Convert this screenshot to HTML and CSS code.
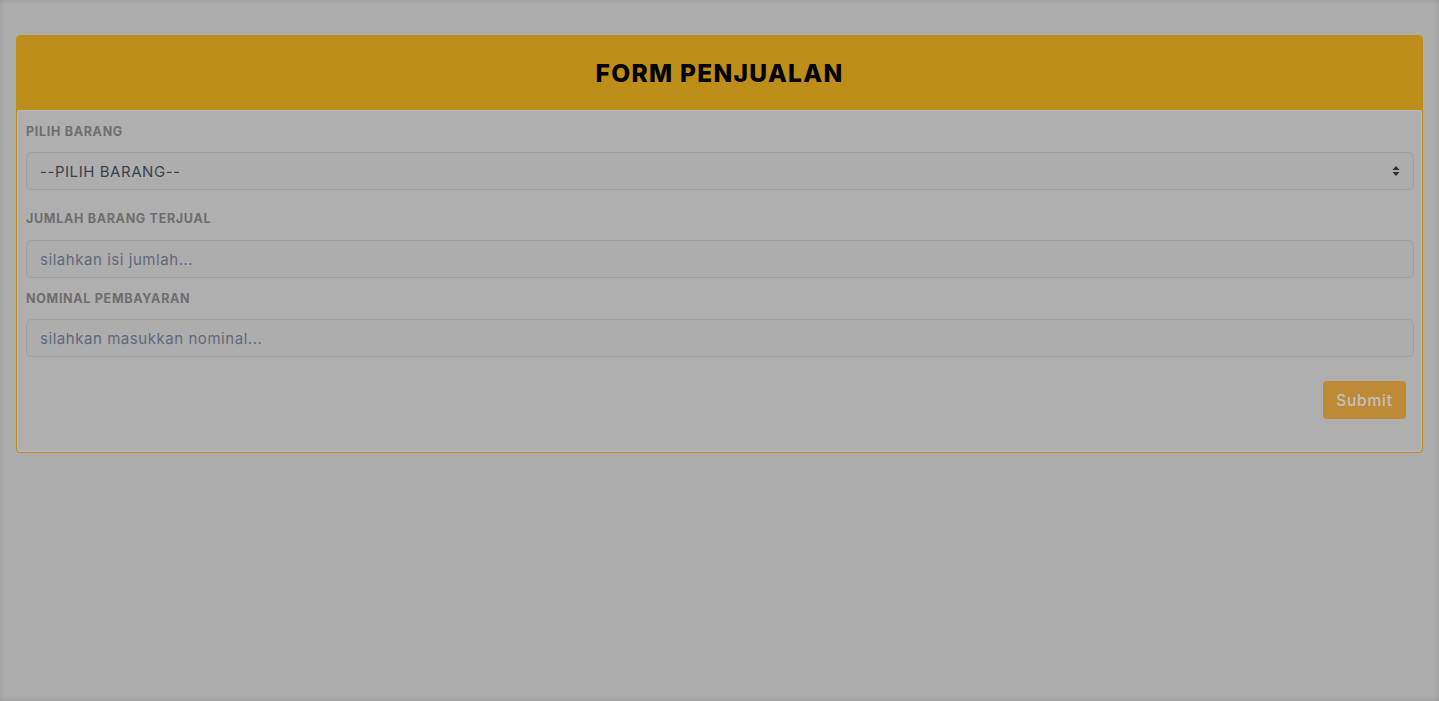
FILE: index.html
```html
<!DOCTYPE html>
<html lang="id">
<head>
    <meta charset="UTF-8">
    <meta name="viewport" content="width=device-width, initial-scale=1.0">
    <title>Form Penjualan</title>
    <link rel="stylesheet" href="styles.css">
</head>
<body>
    <div class="page">
        <div class="card">
            <div class="card-header">
                <h1>FORM PENJUALAN</h1>
            </div>
            <div class="card-body">
                <div class="form-group first">
                    <label for="barang">PILIH BARANG</label>
                    <div class="select-wrap">
                        <select id="barang">
                            <option>--PILIH BARANG--</option>
                        </select>
                        <svg class="caret" width="8" height="12" viewBox="0 0 8 12">
                            <path d="M4 1 L7.5 5 L0.5 5 Z M4 11 L7.5 7 L0.5 7 Z" fill="#2b2f36"/>
                        </svg>
                    </div>
                </div>

                <div class="form-group second">
                    <label for="jumlah">JUMLAH BARANG TERJUAL</label>
                    <input type="text" id="jumlah" placeholder="silahkan isi jumlah...">
                </div>

                <div class="form-group third">
                    <label for="nominal">NOMINAL PEMBAYARAN</label>
                    <input type="text" id="nominal" placeholder="silahkan masukkan nominal...">
                </div>

                <div class="actions">
                    <button type="button">Submit</button>
                </div>
            </div>
        </div>
    </div>
</body>
</html>
```

FILE: styles.css
```css
* {
    box-sizing: border-box;
    margin: 0;
    padding: 0;
    font-family: 'Inter', 'Open Sans', sans-serif;
}
body {
    background-color: #adadad;
}
.page {
    min-height: 701px;
    padding: 35px 16px;
    box-shadow: inset 0 0 6px rgba(0,0,0,0.12);
}
.card {
    border: 1px solid #bd8e19;
    border-radius: 4px;
    background: #adadad;
}
.card-header {
    background: #bd8e19;
    height: 74px;
    display: flex;
    align-items: center;
    justify-content: center;
    border-radius: 3px 3px 0 0;
}
.card-header h1 {
    font-size: 24.5px;
    font-weight: 800;
    color: #000;
    letter-spacing: 1.3px;
}
.card-body {
    border: 1px solid #b9b9b9;
    border-radius: 4px;
    background: #afafaf;
    padding: 11px 7px 32px 8px;
}
.form-group label {
    display: block;
    font-size: 12.5px;
    font-weight: 700;
    color: #6e6e6e;
    line-height: 20px;
    letter-spacing: 0.7px;
}
.form-group.first label {
    margin-bottom: 10px;
}
.form-group.second {
    margin-top: 19px;
}
.form-group.second label {
    margin-bottom: 11px;
}
.form-group.third {
    margin-top: 11px;
}
.form-group.third label {
    margin-bottom: 10px;
}
.select-wrap {
    position: relative;
}
select, input {
    display: block;
    width: 100%;
    height: 38px;
    padding: 0 13px;
    border: 1px solid #a0a0a0;
    border-radius: 5px;
    background: #adadad;
    font-size: 15px;
    color: #3a4150;
    letter-spacing: 0.55px;
    appearance: none;
    -webkit-appearance: none;
    outline: none;
}
input::placeholder {
    color: #5f687a;
}
.caret {
    position: absolute;
    right: 14px;
    top: 13px;
}
.actions {
    display: flex;
    justify-content: flex-end;
    margin-top: 24px;
    padding-right: 8px;
}
button {
    background: #be8a35;
    color: #c2c2c2;
    border: none;
    border-radius: 4px;
    width: 83px;
    height: 38px;
    font-size: 15.5px;
    font-weight: 500;
    letter-spacing: 0.8px;
    cursor: pointer;
}
```
